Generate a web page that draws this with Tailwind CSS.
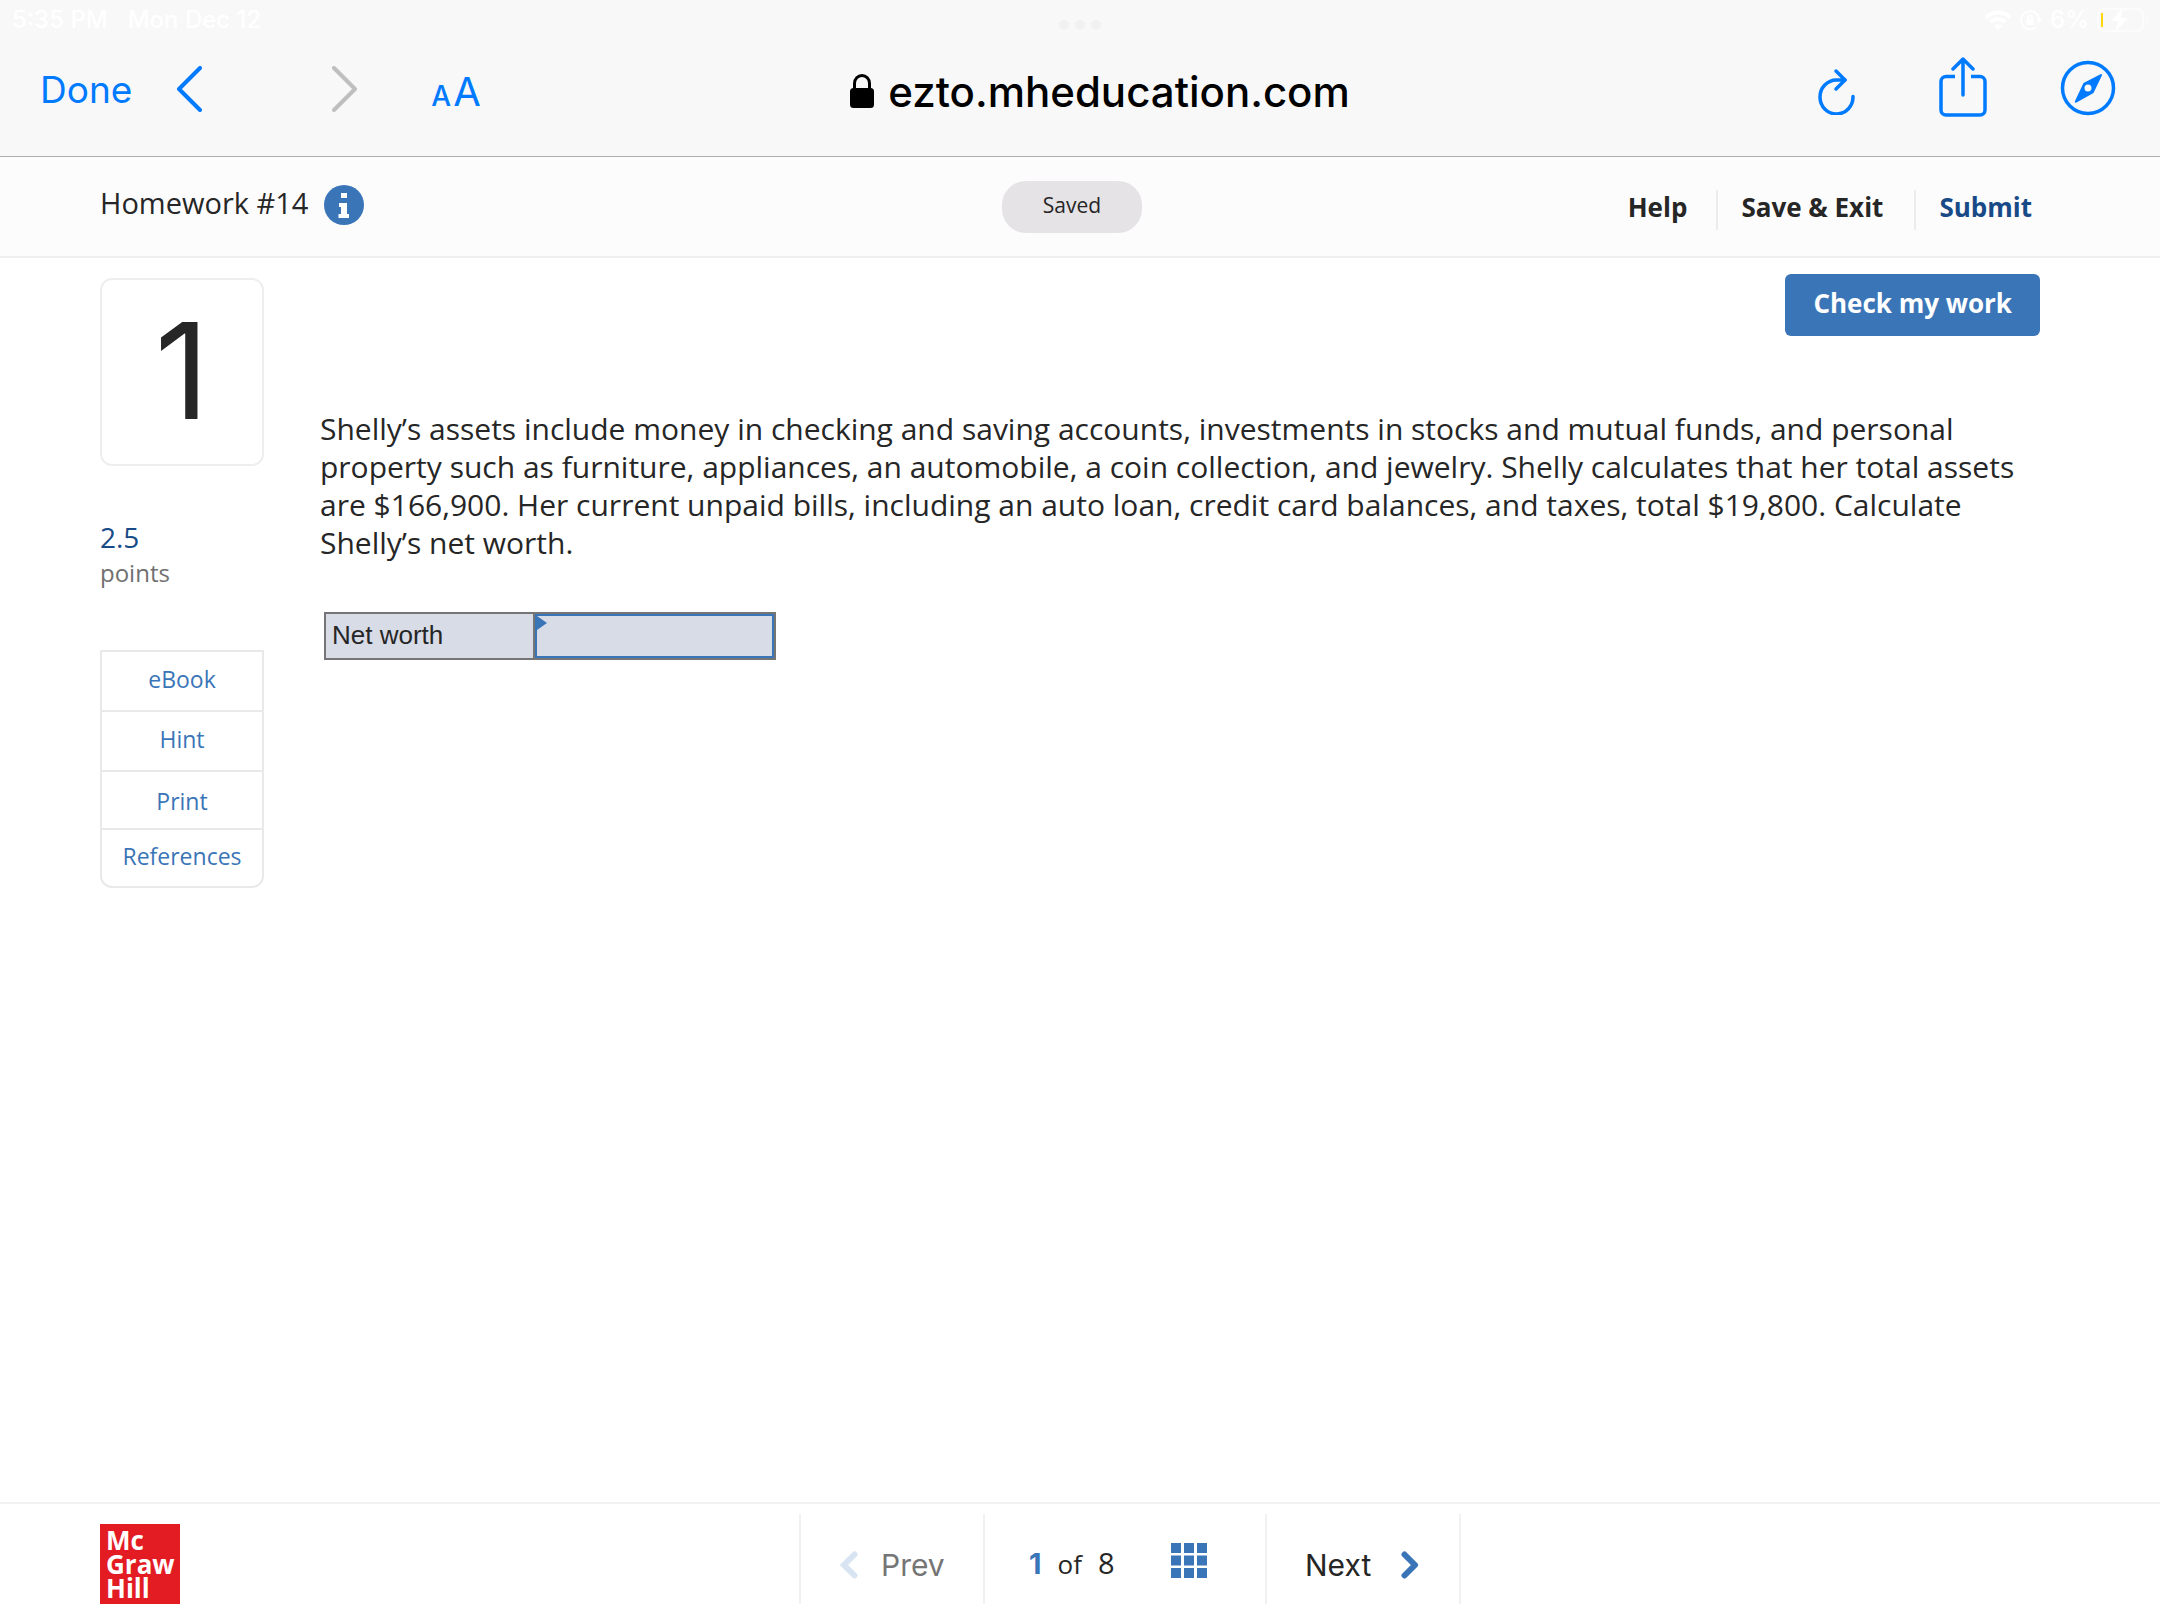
<!DOCTYPE html>
<html lang="en">
<head>
<meta charset="utf-8">
<meta name="viewport" content="width=device-width, initial-scale=1">
<title>Homework #14</title>
<script src="https://cdn.jsdelivr.net/npm/@tailwindcss/browser@4"></script>
</head>
<body class="flex min-h-screen flex-col bg-white font-['Open_Sans',sans-serif] text-[#262626]">

<!-- Browser chrome -->
<div class="border-b border-[#adadad] bg-[#f8f8f8] pb-4 font-['Inter',sans-serif]">
  <div class="flex h-10 items-center px-3 text-[24px] font-medium text-white">
    <div class="flex flex-1 gap-5"><span>5:35 PM</span><span>Mon Dec 12</span></div>
    <div class="flex gap-1.5 pt-2.5">
      <span class="size-2.5 rounded-full bg-[#f1f1f1]"></span>
      <span class="size-2.5 rounded-full bg-[#f1f1f1]"></span>
      <span class="size-2.5 rounded-full bg-[#f1f1f1]"></span>
    </div>
    <div class="flex flex-1 items-center justify-end gap-2">
      <svg class="h-5 w-7" viewBox="0 0 28 20" fill="none" stroke="#fff" stroke-width="4"><path d="M2 7.500a17 17 0 0 1 24 0M6.500 12a10.600 10.600 0 0 1 15 0"/><path d="M14 20l-4-4a5.600 5.600 0 0 1 8 0z" fill="#fff" stroke="none"/></svg>
      <svg class="h-5 w-[22px]" viewBox="0 0 22 20" fill="none" stroke="#fff" stroke-width="1.800"><path d="M16 17a9 9 0 1 1 3-7"/><path d="M16 9h6l-3 4z" fill="#fff" stroke="none"/><rect x="6.500" y="9" width="7" height="6" rx="1" fill="#fff" stroke="none"/><path d="M8 9.500V7.500a2 2 0 0 1 4 0v2"/></svg>
      <span>6%</span>
      <svg class="h-6 w-[51px]" viewBox="0 0 51 24" fill="none"><rect x="1" y="1" width="45" height="22" rx="6" stroke="#fcfcfc" stroke-width="2"/><path d="M49 8.500c2 1.500 2 5.500 0 7z" fill="#fcfcfc"/><path d="M4 5h2v14H4z" fill="#ffd60a"/><path d="M25 0L15 13h6l-3 11 13-14h-7z" fill="#fff"/></svg>
    </div>
  </div>
  <div class="flex h-[100px] items-center pl-10">
    <div class="flex flex-1 items-center">
      <button type="button" class="text-[37px] text-[#007aff]">Done</button>
      <button type="button" aria-label="Back" class="ml-11 pb-0.5"><svg class="h-[46px] w-[26px]" viewBox="0 0 26 46" fill="none" stroke="#007aff" stroke-width="4" stroke-linecap="round" stroke-linejoin="round"><path d="M24 2L3 23l21 21"/></svg></button>
      <button type="button" aria-label="Forward" disabled class="ml-[130px] pb-0.5"><svg class="h-[46px] w-[26px]" viewBox="0 0 26 46" fill="none" stroke="#bfbfbf" stroke-width="4" stroke-linecap="round" stroke-linejoin="round"><path d="M2 2l21 21L2 44"/></svg></button>
      <button type="button" aria-label="Text size" class="ml-[73px] flex items-baseline gap-0.5 pt-1 text-[#007aff]"><span class="text-[28px] font-medium">A</span><span class="text-[40px]">A</span></button>
    </div>
    <div class="flex items-center gap-3.5 pt-0.5">
      <svg class="h-[34px] w-6" viewBox="0 0 24 34"><rect y="14" width="24" height="20" rx="3.500"/><path d="M4.500 16V9.500a7.500 8 0 0 1 15 0V16" fill="none" stroke="#000" stroke-width="3"/></svg>
      <span class="text-[42px] font-medium text-black">ezto.mheducation.com</span>
    </div>
    <div class="flex flex-1 items-center justify-end text-[#007aff]">
      <button type="button" aria-label="Reload" class="mr-[84px] pt-0.5"><svg class="h-12 w-[37px]" viewBox="0 0 37 48" fill="none" stroke="currentColor" stroke-width="3.500" stroke-linecap="round" stroke-linejoin="round"><path d="M27 13H18.500A16.500 17 0 1 0 35 29.500"/><path d="M18 4l9 9-9 9"/></svg></button>
      <button type="button" aria-label="Share" class="mr-[73px] pb-1.5"><svg class="h-[60px] w-12" viewBox="0 0 48 60" fill="none" stroke="currentColor" stroke-width="3.500" stroke-linecap="round" stroke-linejoin="round"><path d="M16 19.500H7a5 5 0 0 0-5 5V53a5 5 0 0 0 5 5h34a5 5 0 0 0 5-5V24.500a5 5 0 0 0-5-5h-9" stroke-linecap="butt"/><path d="M24 38V3M14 12L24 2l10 10"/></svg></button>
      <button type="button" aria-label="Open in Safari" class="mr-11 pb-1"><svg class="size-[56px]" viewBox="0 0 56 56" fill="none"><circle cx="28" cy="28" r="25.500" stroke="currentColor" stroke-width="3.500"/><path fill-rule="evenodd" d="M40.500 14.200c1-.6 2 .3 1.400 1.400L33.500 33 16.500 42.500c-1.200.6-2.200-.5-1.500-1.500L23.500 23zM28 24.500a3.500 3.500 0 1 0 0 7 3.500 3.500 0 0 0 0-7z" fill="currentColor"/></svg></button>
    </div>
  </div>
</div>

<!-- Assignment bar -->
<header class="flex h-[101px] items-center border-b-2 border-[#efefef] bg-[#fcfcfc] pr-[116px] pl-[100px]">
  <div class="flex flex-1 items-center gap-4 pb-1">
    <h1 class="pb-1 text-[29px]">Homework #14</h1>
    <button type="button" aria-label="Assignment information"><svg class="size-10" viewBox="0 0 40 40"><circle cx="20" cy="20" r="20" fill="#3a75b8"/><path d="M17 8h6v5h-6zM15 18h8v11h2v4H14.500v-4H17v-7h-2z" fill="#fff"/></svg></button>
  </div>
  <div role="status" class="flex h-[52px] w-[140px] items-center justify-center rounded-3xl bg-[#e5e3e6] pb-0.5 text-[21px]">Saved</div>
  <nav class="flex flex-1 items-center justify-end pt-1.5 text-[26px] font-bold">
    <a href="#" class="flex h-10 items-center border-r-2 border-[#ececec] pr-[29px] pb-1">Help</a>
    <a href="#" class="flex h-10 items-center border-r-2 border-[#ececec] pr-[31px] pb-1 pl-[23px]">Save &amp; Exit</a>
    <a href="#" class="mr-3 flex h-10 items-center pb-1 pl-[23px] text-[#174a86]">Submit</a>
  </nav>
</header>

<!-- Question -->
<main class="flex flex-1 items-start gap-14 pr-[120px] pl-[100px]">
  <aside class="w-[164px] shrink-0 pt-5">
    <div class="flex h-[188px] items-center justify-center rounded-xl border-2 border-[#eee] pb-1 font-['Inter',sans-serif] text-[134px] leading-none">1</div>
    <p class="mt-[53px] text-[28px] leading-9 text-[#174a86]">2.5</p>
    <p class="text-[24px] leading-9 text-[#707070]">points</p>
    <ul class="mt-[59px] divide-y-2 divide-[#e9e9e9] rounded-b-xl border-2 border-[#e9e9e9] text-[23px] text-[#3a75b8]">
      <li><a href="#" class="flex h-[58px] items-center justify-center pb-1">eBook</a></li>
      <li><a href="#" class="flex h-[58px] items-center justify-center pb-1">Hint</a></li>
      <li><a href="#" class="flex h-14 items-center justify-center pt-0.5">Print</a></li>
      <li><a href="#" class="flex h-14 items-center justify-center pb-1">References</a></li>
    </ul>
  </aside>
  <section class="flex min-w-0 flex-1 flex-col pt-4">
    <button type="button" class="h-[62px] self-end rounded-md bg-[#3a75b8] px-7 pb-1 text-[26px] font-bold text-white">Check my work</button>
    <p class="mt-[74px] text-[30px] leading-[38px]">Shelly’s assets include money in checking and saving accounts, investments in stocks and mutual funds, and personal property such as furniture, appliances, an automobile, a coin collection, and jewelry. Shelly calculates that her total assets are $166,900. Her current unpaid bills, including an auto loan, credit card balances, and taxes, total $19,800. Calculate Shelly’s net worth.</p>
    <table class="mt-[50px] ml-1 w-[452px] border-collapse self-start bg-[#d8dce7] font-['Liberation_Sans',sans-serif] text-[26px]">
      <tbody>
        <tr>
          <th scope="row" class="w-[209px] border-2 border-[#757575] p-0 pb-0.5 pl-1.5 text-left font-normal"><label for="net-worth">Net worth</label></th>
          <td class="border-2 border-[#757575] p-0">
            <div class="relative">
              <input id="net-worth" type="text" class="block h-11 w-full border-2 border-[#3a75b8] px-4 outline-none">
              <svg class="absolute top-0.5 left-0 h-[14px] w-3" viewBox="0 0 12 14"><path d="M0 0h2l10 7-10 7H0z" fill="#3a75b8"/></svg>
            </div>
          </td>
        </tr>
      </tbody>
    </table>
  </section>
</main>

<!-- Question navigation -->
<footer class="flex h-[118px] items-start border-t-2 border-[#f1f1f1] pt-2.5 pl-[100px]">
  <div class="flex-1 pt-2.5">
    <div class="w-20 bg-[#e31b23] py-1 pl-1.5 text-[26px] leading-6 font-bold text-white"><div>Mc</div><div>Graw</div><div>Hill</div></div>
  </div>
  <div class="flex h-[90px] divide-x-2 divide-[#f1f1f1] border-x-2 border-[#f1f1f1]">
    <button type="button" disabled class="flex w-[184px] items-center gap-[23px] pt-3 pl-[39px] font-['Inter',sans-serif] text-[30px] text-[#757575]">
      <svg class="h-7 w-[18px]" viewBox="0 0 18 28" fill="none" stroke="#d8e4f2" stroke-width="6" stroke-linecap="round"><path d="M14.500 3.500L4 14l10.500 10.500"/></svg>Prev</button>
    <div class="flex w-[282px] items-center pl-11">
      <div class="flex items-baseline gap-4 pt-2 text-[29px]"><span class="font-['Inter',sans-serif] font-bold text-[#3a75b8]">1</span><span class="text-[26px]">of</span><span>8</span></div>
      <button type="button" aria-label="Question list" class="ml-14 pt-0.5"><svg class="h-[35px] w-9" viewBox="0 0 36 35" fill="#3a75b8"><path d="M0 0h10v10H0zM13 0h10v10H13zM26 0h10v10H26zM0 12.500h10v10H0zM13 12.500h10v10H13zM26 12.500h10v10H26zM0 25h10v10H0zM13 25h10v10H13zM26 25h10v10H26z"/></svg></button>
    </div>
    <button type="button" class="flex w-[192px] items-center gap-[30px] pt-3 pl-[38px] font-['Inter',sans-serif] text-[30px]">Next
      <svg class="h-7 w-[18px]" viewBox="0 0 18 28" fill="none" stroke="#3a75b8" stroke-width="6" stroke-linecap="round" stroke-linejoin="round"><path d="M3.500 3.500L14 14 3.500 24.500"/></svg></button>
  </div>
  <div class="flex-1"></div>
</footer>
</body>
</html>
